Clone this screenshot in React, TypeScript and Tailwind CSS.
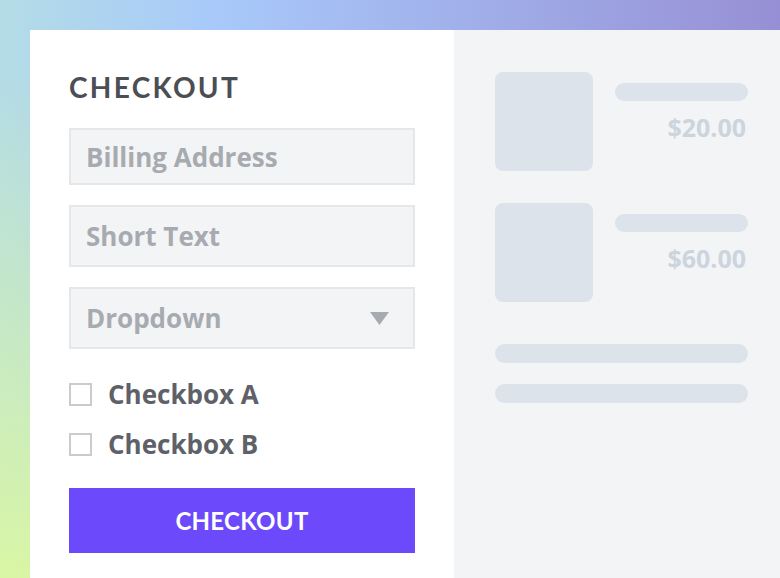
import React from "react";

const inputBox =
  "flex w-full items-center border-2 border-[#e6e7e9] bg-[#f3f4f6] pl-[15px] pr-[24px] text-[26px] font-bold text-[#a7abb0]";

const Field: React.FC<{ label: string; h: string; dropdown?: boolean }> = ({ label, h, dropdown }) => (
  <div className={`${inputBox} ${h} justify-between`}>
    <span className="leading-[34px]">{label}</span>
    {dropdown && (
      <svg width="19" height="13" viewBox="0 0 19 13" className="mt-[1px]">
        <path d="M0 0H19L9.5 13Z" fill="#a7abb0" />
      </svg>
    )}
  </div>
);

const Checkbox: React.FC<{ label: string }> = ({ label }) => (
  <label className="flex h-[28px] items-center gap-[16px] text-[26px] font-bold text-[#5e6168]">
    <span className="h-[23px] w-[23px] border-2 border-[#c9cbce] bg-white" />
    <span className="leading-[28px]">{label}</span>
  </label>
);

const CartItem: React.FC<{ price: string }> = ({ price }) => (
  <div className="flex gap-[22px]">
    <div className="h-[99px] w-[98px] rounded-[8px] bg-[#dde3ea]" />
    <div className="flex flex-1 flex-col items-end pt-[11px]">
      <div className="h-[18px] w-full rounded-full bg-[#dde3ea]" />
      <div className="mr-[2px] mt-[11px] text-[25px] font-bold leading-[30px] text-[#ccd4de]">{price}</div>
    </div>
  </div>
);

export default function App() {
  return (
    <div
      className="h-[578px] w-[780px] overflow-hidden bg-[linear-gradient(180deg,rgba(217,246,165,0)_12%,#d9f6a5_100%),linear-gradient(90deg,#b4dce6_0%,#a8c9fa_28%,#978fd5_100%)] pl-[30px] pt-[30px]"
      style={{ fontFamily: '"Open Sans", sans-serif' }}
    >
      <div className="flex h-[548px]">
        {/* form */}
        <div className="w-[424px] bg-white px-[39px] pt-[40px]">
          <h1 className="mb-[24px] font-['Lato',sans-serif] text-[28px] font-bold leading-[34px] tracking-[2.3px] text-[#4b4e53]">
            CHECKOUT
          </h1>
          <div className="flex flex-col gap-[20px]">
            <Field label="Billing Address" h="h-[57px]" />
            <Field label="Short Text" h="h-[62px]" />
            <Field label="Dropdown" h="h-[62px]" dropdown />
          </div>
          <div className="mt-[31px] flex flex-col gap-[22px]">
            <Checkbox label="Checkbox A" />
            <Checkbox label="Checkbox B" />
          </div>
          <button className="mt-[30px] flex h-[65px] w-full items-center justify-center bg-[#6c4afc] font-['Lato',sans-serif] text-[24px] font-bold tracking-[0.3px] text-white">
            CHECKOUT
          </button>
        </div>

        {/* summary */}
        <div className="flex-1 bg-[#f3f4f6] pl-[41px] pr-[32px] pt-[42px]">
          <div className="flex flex-col gap-[32px]">
            <CartItem price="$20.00" />
            <CartItem price="$60.00" />
          </div>
          <div className="mt-[42px] flex flex-col gap-[21px]">
            <div className="h-[19px] rounded-full bg-[#dde3ea]" />
            <div className="h-[19px] rounded-full bg-[#dde3ea]" />
          </div>
        </div>
      </div>
    </div>
  );
}
